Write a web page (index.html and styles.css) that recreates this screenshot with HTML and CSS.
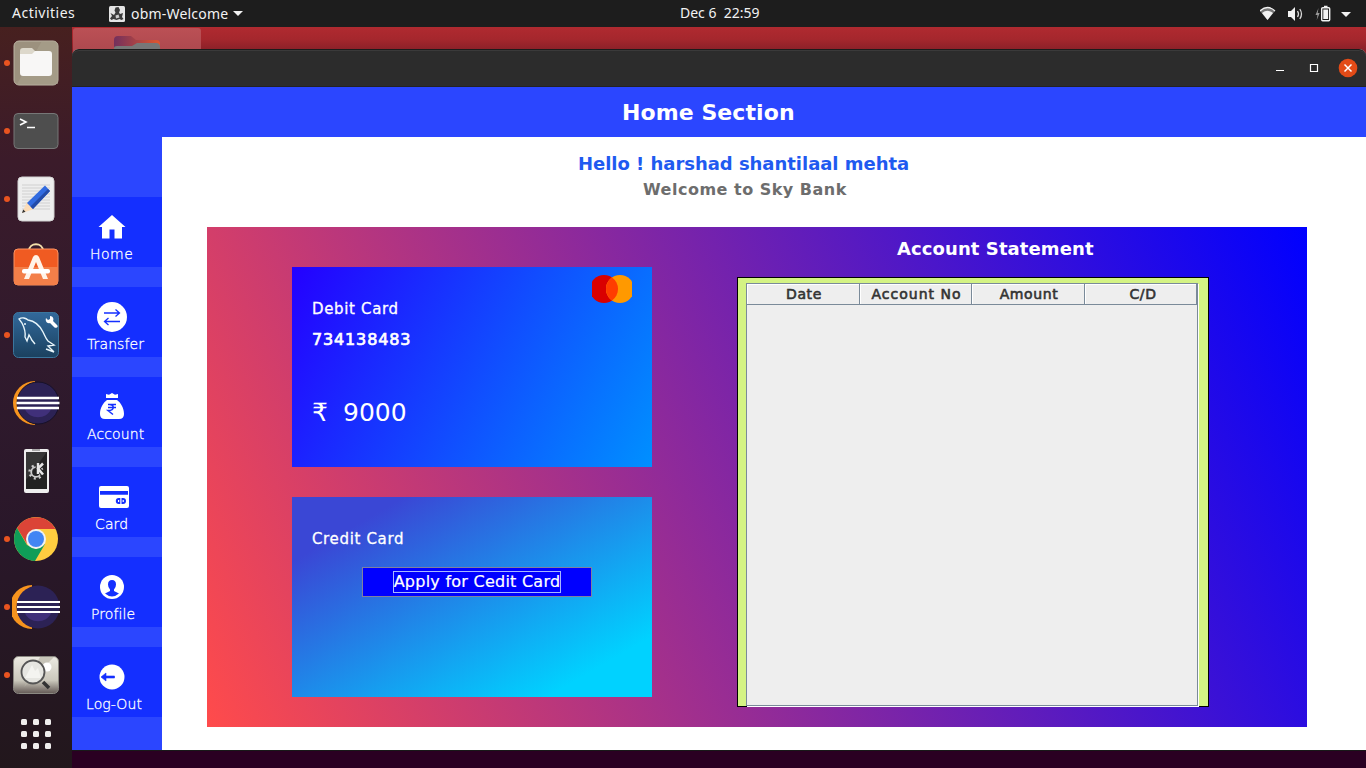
FILE: index.html
```html
<!DOCTYPE html>
<html lang="en">
<head>
<meta charset="utf-8">
<title>obm-Welcome</title>
<link rel="stylesheet" href="styles.css">
</head>
<body>
<header class="topbar">
  <span class="activities">Activities</span>
  <span class="app-menu">
    <svg class="app-icon" width="16" height="16" viewBox="0 0 16 16"><rect width="16" height="16" rx="1.5" fill="#e4e4e4"/><path d="M6.500 1.500l3-.5 1.500 3-1 2.500 1 1.500 3-1-1 4 1.500 2-2 1-2-1-3 1-3-1-2 1-1.500-1.500L3 10 1.500 7 5 9l1.500-2.500-1-2z" fill="#3a3a3a"/><path d="M6.500 9.500l3-1 1 3-3.500 1z" fill="#ccc"/></svg>
    <span class="app-name">obm-Welcome</span>
    <svg width="10" height="5" viewBox="0 0 10 5"><path d="M0 0h10L5 5z" fill="#f2f2f2"/></svg>
  </span>
  <span class="clock">Dec 6&nbsp; 22:59</span>
  <svg class="status" width="96" height="18" viewBox="0 0 96 18">
    <path d="M0 6Q7.500-1 15 6L7.500 15z" fill="#777"/><path d="M0 6Q7.500-1 15 6" fill="none" stroke="#f2f2f2" stroke-width="1.300"/><path d="M2 8Q7.500 3.500 13 8L7.500 15z" fill="#f2f2f2"/>
    <path d="M28 6h3l4-4v14l-4-4h-3z" fill="#f2f2f2"/><path d="M37.500 6q2 3 0 6M39.800 4q3.400 5 0 10" fill="none" stroke="#d8d8d8" stroke-width="1.300"/>
    <path d="M58.500 3l-3 7h2l-.8 5 3-7h-2z" fill="#999"/><rect x="61.700" y="2.700" width="8" height="13" rx="1" fill="none" stroke="#f2f2f2" stroke-width="1.400"/><path d="M64 .8h3.500v2H64zM63.300 4.500h4.800v9.500h-4.800z" fill="#f2f2f2"/>
    <path d="M81 7h10l-5 5z" fill="#f2f2f2"/>
  </svg>
</header>
<div class="desktop">
  <nav class="dock">
    <div class="launcher running"><svg width="48" height="48" viewBox="0 0 48 48"><rect x="2" y="2" width="44" height="44" rx="5" fill="#9c917e" stroke="#bcb5a4"/><path d="M30 2h11q5 0 5 5v38H5z" fill="#aaa28e" opacity=".6"/><path d="M8 12q0-3 3-3h9l4 4h10v6H8z" fill="#ddd8cb"/><path d="M8 15h12l3-3h14q3 0 3 3v19q0 3-3 3H11q-3 0-3-3z" fill="#f8f7f6"/></svg></div>
    <div class="launcher running"><svg width="48" height="48" viewBox="0 0 48 48"><rect x="2" y="6.500" width="44" height="35" rx="4" fill="#4e4e4e" stroke="#777"/><path d="M8 12l6 3-6 3M15 20.500h8" fill="none" stroke="#fff" stroke-width="1.600"/></svg></div>
    <div class="launcher running"><svg width="48" height="48" viewBox="0 0 48 48"><rect x="6" y="2" width="36" height="44" rx="4" fill="#eee" stroke="#d2d2d2"/><path d="M10 10h28M10 13h28M10 16h28M10 19h28M10 22h28M10 25h28M10 28h28M10 31h28M10 34h28" stroke="#c8c8c8" stroke-width=".8"/><path d="M10 38l5-11 7 7z" fill="#fbdcb8"/><path d="M10 38l1.200-3.500 2.300 2.300z" fill="#333"/><path d="M15 28L33 10.500l5 5.500L21 34z" fill="#316be0"/><path d="M18.500 31.500L36 14l2 2L21 34z" fill="#234ba8"/></svg></div>
    <div class="launcher"><svg width="48" height="48" viewBox="0 0 48 48"><path d="M17 8c0-9 14-9 14 0" fill="none" stroke="#f3dfaa" stroke-width="2"/><rect x="2" y="6" width="44" height="36" rx="4" fill="#f05b22" stroke="#fb9362"/><path d="M2 24h44v14q0 4-4 4H6q-4 0-4-4z" fill="#f37f49"/><path d="M12 36l9-22q1-2 3-2t3 2l9 22h-5l-7-17-7 17z" fill="#fff3e8"/><rect x="10" y="26" width="28" height="4.500" rx="2" fill="#fff"/></svg></div>
    <div class="launcher running"><svg width="48" height="48" viewBox="0 0 48 48"><defs><linearGradient id="wb" x2="0" y2="1"><stop stop-color="#32699b"/><stop offset="1" stop-color="#1b415f"/></linearGradient></defs><rect x="1.500" y="1.500" width="45" height="45" rx="5" fill="url(#wb)" stroke="#3b769d"/><path d="M20 29l-3-5-2 6-2-4c1-6-1-10-3-14l-3-4c3-2 7-1 9 1 7 1 12 6 15 12 2 4 3 7 5 9l6 4-6 1 6 6-8-3M12 13h2M19 28l4 5" fill="none" stroke="#e9f6fb" stroke-width="1.400"/><path d="M34 7l2 2 2-1 0-3c3 0 4 3 3 5l4 4c2 2-1 4-3 2l-4-4c-3 1-5-2-4-5z" fill="#fff"/></svg></div>
    <div class="launcher"><svg width="48" height="48" viewBox="0 0 48 48"><path d="M23 2a22 22 0 0 0 0 44" fill="#f7941e"/><circle cx="26" cy="24" r="21" fill="#2c2255" stroke="#171129"/><path d="M13 30h26c-4 11-22 11-26 0" fill="#40307a"/><path d="M5 19h42M4.500 24h43M5 29h42" stroke="#fff" stroke-width="2.300"/></svg></div>
    <div class="launcher"><svg width="48" height="48" viewBox="0 0 48 48"><rect x="12" y="2" width="25" height="44" rx="2" fill="#eee"/><path d="M14 5h21v37H14z" fill="#222"/><path d="M14 5h21L14 33z" fill="#373737"/><path d="M20 2h8v2h-8z" fill="#aaa"/><circle cx="24" cy="25" r="6.500" fill="none" stroke="#ccc" stroke-width="2.400" stroke-dasharray="2 3.100"/><circle cx="24" cy="25" r="4.800" fill="none" stroke="#ccc" stroke-width="1.800"/><path d="M26 16v11M31 16.500l-5 5 5 6" fill="none" stroke="#222" stroke-width="4.500"/><path d="M26 16v11M31 16.500l-5 5 5 6" fill="none" stroke="#e6e6e6" stroke-width="2.500"/></svg></div>
    <div class="launcher running"><svg width="48" height="48" viewBox="0 0 48 48"><circle cx="24" cy="24" r="22" fill="#ffcd40"/><path d="M5 13A22 22 0 0 1 43.500 14H24L15 29z" fill="#db4437"/><path d="M5 13a22 22 0 0 0 18 33l10-17-9 5-9-4z" fill="#0f9d58"/><circle cx="24" cy="24" r="10" fill="#f1f1f1"/><circle cx="24" cy="24" r="8" fill="#4285f4"/></svg></div>
    <div class="launcher running"><svg width="48" height="48" viewBox="0 0 48 48"><path d="M20 2a22 22 0 0 0 0 44" fill="#f7941e"/><circle cx="26" cy="24" r="21.500" fill="#2c2255"/><path d="M13 30h26c-4 11-22 11-26 0" fill="#40307a"/><path d="M5 19h43M5 24h43M5 29h43" stroke="#fff" stroke-width="2"/></svg></div>
    <div class="launcher running"><svg width="48" height="48" viewBox="0 0 48 48"><defs><linearGradient id="iv" x2="0" y2="1"><stop stop-color="#eceae2"/><stop offset=".65" stop-color="#cac7bb"/><stop offset="1" stop-color="#635955"/></linearGradient></defs><rect x="1.500" y="5.500" width="45" height="37" rx="5" fill="url(#iv)" stroke="#8b8982"/><path d="M28 6h14L12 36z" fill="#b9b6aa" opacity=".7"/><circle cx="35" cy="16" r="4.500" fill="#fff"/><circle cx="21" cy="21" r="11.500" fill="#e6e6e1" stroke="#555" stroke-width="1.800"/><path d="M13 27l7-13 3 6 3-3 3 10z" fill="#f4f4f0"/><path d="M31 31l6 6" stroke="#333" stroke-width="3.500"/></svg></div>
    <div class="apps"><i></i><i></i><i></i><i></i><i></i><i></i><i></i><i></i><i></i></div>
  </nav>
  <div class="workspace">
    <div class="wallpaper"><div class="desk-item"><svg width="46" height="13" viewBox="0 0 46 13"><defs><linearGradient id="fd"><stop stop-color="#72305d"/><stop offset="1" stop-color="#e2562e"/></linearGradient></defs><path d="M0 13V4q0-4 4-4h13l5 4h20q4 0 4 4v5z" fill="url(#fd)"/><path d="M0 13v-1q0-2 3-2h15l5-3h19q4 0 4 4v2z" fill="#777"/></svg></div></div>
    <main class="window">
      <div class="titlebar">
        <svg width="84" height="20" viewBox="0 0 84 20"><path d="M2 12.500h8" stroke="#fff"/><path d="M36.500 6.500h7v7h-7z" fill="none" stroke="#fff" stroke-width="1.200"/><circle cx="74" cy="10" r="9.300" fill="#e34b17"/><path d="M70.500 6.500l7 7M77.500 6.500l-7 7" stroke="#fff" stroke-width="1.500"/></svg>
      </div>
      <h1 class="section-title"><span>Home Section</span></h1>
      <div class="app">
        <aside class="sidebar">
          <a class="tile"><svg width="30" height="30" viewBox="0 0 30 30"><path d="M15 3L28.500 15H25v11.500h-7.500v-9h-5v9H5V15H1.500z" fill="#fff"/></svg><span class="t-home">Home</span></a>
          <a class="tile"><svg width="30" height="30" viewBox="0 0 30 30"><circle cx="15" cy="15" r="15" fill="#fff"/><path d="M7 11h15M18.500 7.500L22.500 11l-4 3.500M23 19.500H8M11.500 16l-4 3.500 4 3.500" fill="none" stroke="#142fff" stroke-width="1.300"/></svg><span class="t-transfer">Transfer</span></a>
          <a class="tile"><svg width="30" height="30" viewBox="0 0 30 30"><path d="M9 2l3 .7L15 1l3 1.700L21 2v4H9zM10 8h10c4 3 7 8 7 14q0 5-5 5H8q-5 0-5-5c0-6 3-11 7-14" fill="#fff"/><path d="M11 12.500h8M11 15.500h8M11 12.500c7-1 7 6 0 6l5 4" fill="none" stroke="#142fff" stroke-width="1.500"/></svg><span class="t-account">Account</span></a>
          <a class="tile"><svg class="card-glyph" width="30" height="30" viewBox="0 0 30 30"><path d="M2 4h26q2 0 2 2v3H0V6q0-2 2-2M0 12.500h30V24q0 2-2 2H2q-2 0-2-2z" fill="#fff"/><path d="M1 9h28v3.500H1z" fill="#142fff"/><path d="M0 9h1v4H0zM29 9h1v4h-1z" fill="#fff"/><path d="M21.300 16v6h-1.500a3 3 0 1 1 0-6zM22.500 16h1.500a3 3 0 1 1 0 6h-1.500z" fill="#142fff"/><path d="M19 18h1.200v2H19zM23.600 18h1.200v2h-1.200z" fill="#fff"/></svg><span class="t-card">Card</span></a>
          <a class="tile"><svg width="30" height="30" viewBox="0 0 30 30"><circle cx="15" cy="15" r="12" fill="#fff"/><path d="M15 8q4 0 4 4.500 0 3-2 5v1.500l5 2.500q-7 6-14 0l5-2.500v-1.500q-2-2-2-5Q11 8 15 8" fill="#142fff"/></svg><span class="t-profile">Profile</span></a>
          <a class="tile"><svg width="30" height="30" viewBox="0 0 30 30"><circle cx="15" cy="15" r="12.500" fill="#fff"/><path d="M4 15l5-4v3h8.500v2H9v3z" fill="#142fff" stroke="#142fff" stroke-width=".6"/></svg><span class="t-logout">Log-Out</span></a>
        </aside>
        <section class="content">
          <div class="hello"><span>Hello ! harshad shantilaal mehta</span></div>
          <div class="welcome"><span>Welcome to Sky Bank</span></div>
          <div class="panel">
            <div class="cards">
              <article class="card debit">
                <svg class="brand" width="40" height="28" viewBox="0 0 40 28"><circle cx="12" cy="14" r="14" fill="#d90000"/><circle cx="28" cy="14" r="14" fill="#ff9900"/><path d="M20 2.500a14 14 0 0 1 0 23 14 14 0 0 1 0-23" fill="#ff3d00"/></svg>
                <div class="label">Debit Card</div>
                <div class="number">734138483</div>
                <div class="balance"><span class="rupee">₹</span><span class="amount">9000</span></div>
              </article>
              <article class="card credit">
                <div class="label">Credit Card</div>
                <button class="apply"><span>Apply for Cedit Card</span></button>
              </article>
            </div>
            <div class="statement">
              <h2>Account Statement</h2>
              <div class="frame">
                <div class="scroll">
                  <div class="thead"><div>Date</div><div class="wide">Account No</div><div>Amount</div><div>C/D</div></div>
                </div>
              </div>
            </div>
          </div>
        </section>
      </div>
    </main>
  </div>
</div>
</body>
</html>
```
FILE: styles.css
```css
* { box-sizing: border-box; }
body { margin: 0; width: 1366px; height: 768px; overflow: hidden; font-family: "DejaVu Sans", sans-serif; background: #2a0023; }
svg { display: block; flex: none; }
span { white-space: nowrap; }

.topbar { height: 27px; background: #1d1d1d; color: #f2f2f2; display: flex; align-items: center; font: 14px/26px "Noto Sans", sans-serif; padding-left: 12px; }
.topbar > span { height: 27px; }
.activities { width: 97px; letter-spacing: .5px; }
.app-menu { display: flex; align-items: center; width: 571px; }
.app-icon { margin-right: 6px; }
.app-name { width: 102px; letter-spacing: .2px; }
.clock { width: 580px; }
.status { margin-top: 0; }

.desktop { display: flex; height: 741px; }
.dock { width: 72px; background: linear-gradient(#47201f, #3b1b2a 18%, #301a2d 45%, #291729 70%, #22171c); padding-top: 12px; display: flex; flex-direction: column; flex: none; }
.launcher { height: 48px; margin-bottom: 20px; display: flex; align-items: center; padding-left: 12px; flex: none; }
.launcher.running { padding-left: 4px; }
.launcher.running::before { content: ""; width: 6px; height: 6px; border-radius: 50%; background: #e95420; margin-right: 2px; }
.apps { display: grid; grid-template-columns: repeat(3, 6px); gap: 6px; padding-left: 21px; }
.apps i { width: 6px; height: 6px; border-radius: 1.5px; background: #f0efee; }

.workspace { width: 1294px; background: #2a0022; }
.wallpaper { height: 26px; margin-bottom: -4px; padding: 1px 0 0 1px; background: linear-gradient(#b02a30, #a5272d 12px, #8c2129 22px); }
.desk-item { width: 128px; height: 25px; padding: 8px 0 0 41px; border-radius: 3px 3px 0 0; background: linear-gradient(#bb5055, #ad484e); }

.window { height: 702px; position: relative; border-bottom: 1px solid #191919; background: #fff; border-radius: 7px 7px 0 0; }
.titlebar { height: 38px; background: #2c2c2c; border-radius: 7px 7px 0 0; border-top: 1px solid #1b1b1b; border-bottom: 1px solid #232323; box-shadow: inset 0 1px #3a3a3a; display: flex; justify-content: flex-end; align-items: center; padding-right: 8px; }
.section-title { margin: 0; height: 50px; background: #2b46ff; color: #fff; font-size: 22px; line-height: 52px; letter-spacing: .08px; padding-left: 550px; }
.app { display: flex; height: 613px; }
.sidebar { width: 90px; background: #2b46ff; padding-top: 60px; display: flex; flex-direction: column; gap: 20px; }
.tile { height: 70px; background: #142fff; color: #fff; font-size: 14px; letter-spacing: .1px; font-weight: 200; -webkit-text-stroke: .3px #fff; display: flex; flex-direction: column; align-items: flex-start; padding-top: 15px; }
.tile svg { margin-left: 25px; }
.tile .card-glyph { margin-left: 27px; }
.tile span { line-height: 20px; margin-top: 2px; }
.t-home { padding-left: 18px; letter-spacing: .5px; }
.t-transfer, .t-account { padding-left: 15px; }
.t-card { padding-left: 23px; }
.t-profile { padding-left: 19px; }
.t-logout { padding-left: 14px; }

.content { width: 1204px; padding-top: 14px; }
.hello { padding-left: 416px; font-size: 18px; font-weight: 700; line-height: 26px; letter-spacing: -.03px; color: #1f5af0; height: 26px; }
.welcome { padding-left: 481px; font-size: 16px; font-weight: 700; line-height: 26px; letter-spacing: .5px; color: #6d6d6d; height: 50px; }
.panel { width: 1100px; height: 500px; margin-left: 45px; background: linear-gradient(65.56deg, #ff4b4b, #0000ff); display: flex; padding-left: 85px; }
.cards { width: 445px; padding-top: 40px; display: flex; flex-direction: column; gap: 30px; }
.card { width: 360px; height: 200px; color: #fff; padding: 32px 20px 0; position: relative; }
.debit { background: linear-gradient(119.05deg, #2400ff, #0090ff); }
.credit { background: linear-gradient(150deg, #3a47d5 56px, #00d2ff 301px); }
.brand { position: absolute; left: 300px; top: 8px; }
.label { font-size: 15px; line-height: 20px; height: 20px; letter-spacing: .65px; -webkit-text-stroke: .3px #fff; }
.number { font-size: 16px; line-height: 20px; margin-top: 11px; letter-spacing: .85px; -webkit-text-stroke: .7px #fff; }
.balance { font-size: 25px; line-height: 34px; margin-top: 46px; display: flex; }
.rupee { width: 31px; }
.apply { display: flex; justify-content: center; align-items: center; width: 230px; height: 30px; margin: 18px 0 0 50px; padding: 0; background: #0000ff; border: 1px solid #8080a0; color: #fff; font: 16px/20px "DejaVu Sans", sans-serif; letter-spacing: .25px; -webkit-text-stroke: .2px #fff; }
.apply span { border: 1px solid #a8b8ff; }
.statement { width: 570px; }
.statement h2 { margin: 0; padding: 9px 0 0 160px; height: 50px; font-size: 18px; line-height: 26px; letter-spacing: .09px; color: #fff; white-space: nowrap; }
.frame { width: 472px; height: 430px; border: 1px solid #000; background: #d4f384; padding: 5px 10px 0 8px; }
.scroll { height: 423px; border: 1px solid #7a8a99; background: #eee; box-shadow: 1px 1px #fff; }
.thead { display: grid; grid-template-columns: 113px 112px 113px 112px; height: 21px; }
.thead div { border-right: 1px solid #7a8a99; border-bottom: 1px solid #7a8a99; box-shadow: inset 1px 1px #fff; text-align: center; color: #333; font-size: 14px; line-height: 20px; letter-spacing: .6px; padding-left: 2px; -webkit-text-stroke: .6px #333; }
.thead .wide { letter-spacing: 1px; }
.thead div:last-child { padding-left: 5px; }
```
